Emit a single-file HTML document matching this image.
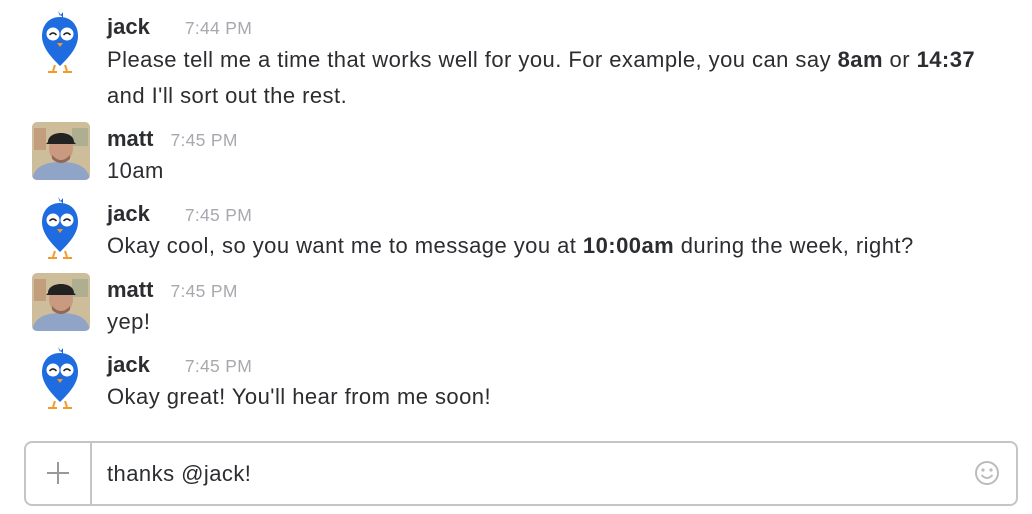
<!DOCTYPE html>
<html><head><meta charset="utf-8"><style>
body{margin:0;width:1032px;height:514px;background:#fff;position:relative;overflow:hidden;font-family:"Liberation Sans",sans-serif;color:#2c2d30}
.a{position:absolute;white-space:nowrap}
.n{font-weight:bold;font-size:22px;color:#2c2d30}
.t{font-size:17.5px;color:#a8a8ae;margin-left:17px;font-weight:normal;letter-spacing:0.3px}
.m{font-size:22px;letter-spacing:0.45px}
.photo{position:absolute;width:58px;height:58px;border-radius:5px;overflow:hidden}
</style></head><body>
<svg width="0" height="0" style="position:absolute"><defs>
<g id="bird">
<path d="M18 3 l2 5 l3 -4 l0 6 z" fill="#1e5fd6"/>
<path d="M20 9 C8 9 2 18 2 28 C2 40 12 50 20 58 C28 50 38 40 38 28 C38 18 32 9 20 9Z" fill="#1f6ce0"/>
<circle cx="13" cy="26" r="6.5" fill="#fff"/>
<circle cx="27" cy="26" r="6.5" fill="#fff"/>
<path d="M9.5 27 q3.5 -4 7 0 M23.5 27 q3.5 -4 7 0" stroke="#222" stroke-width="1.4" fill="none"/>
<path d="M17 35 l3 4 l3 -4z" fill="#f39a2b"/>
<path d="M15 57 l-2 6 M25 57 l2 6 M8 64 h9 M23 64 h9" stroke="#f39a2b" stroke-width="2"/>
</g>
<g id="face">
<rect x="0" y="0" width="58" height="58" fill="#cdbd9b"/>
<rect x="2" y="6" width="12" height="22" fill="#b7805f" opacity=".5"/>
<rect x="40" y="6" width="16" height="18" fill="#9aa58a" opacity=".6"/>
<path d="M0 58 C2 44 14 40 29 40 C44 40 56 44 58 58Z" fill="#8fa4c6"/>
<ellipse cx="29" cy="26" rx="12" ry="15" fill="#c99a80"/>
<path d="M16 20 C16 8 42 8 42 20 L44 22 L14 22Z" fill="#222"/>
<path d="M20 33 q9 10 18 0 l0 4 q-9 8 -18 0z" fill="#6b4a3a" opacity=".6"/>
</g>
</defs></svg>

<svg class="a" style="left:40px;top:8px" width="42" height="66"><use href="#bird"/></svg>
<div class="a n" style="left:107px;top:14px">jack<span class="t" style="margin-left:35px">7:44 PM</span></div>
<div class="a m" style="left:107px;top:47px">Please tell me a time that works well for you. For example, you can say <b>8am</b> or <b>14:37</b></div>
<div class="a m" style="left:107px;top:83px">and I'll sort out the rest.</div>

<svg class="photo" style="left:32px;top:122px" width="58" height="58"><use href="#face"/></svg>
<div class="a n" style="left:107px;top:126px">matt<span class="t">7:45 PM</span></div>
<div class="a m" style="left:107px;top:158px">10am</div>

<svg class="a" style="left:40px;top:194px" width="42" height="66"><use href="#bird"/></svg>
<div class="a n" style="left:107px;top:201px">jack<span class="t" style="margin-left:35px">7:45 PM</span></div>
<div class="a m" style="left:107px;top:233px">Okay cool, so you want me to message you at <b>10:00am</b> during the week, right?</div>

<svg class="photo" style="left:32px;top:273px" width="58" height="58"><use href="#face"/></svg>
<div class="a n" style="left:107px;top:277px">matt<span class="t">7:45 PM</span></div>
<div class="a m" style="left:107px;top:309px">yep!</div>

<svg class="a" style="left:40px;top:344px" width="42" height="66"><use href="#bird"/></svg>
<div class="a n" style="left:107px;top:352px">jack<span class="t" style="margin-left:35px">7:45 PM</span></div>
<div class="a m" style="left:107px;top:384px">Okay great! You'll hear from me soon!</div>

<div class="a" style="left:24px;top:441px;width:990px;height:61px;border:2px solid #c5c5c5;border-radius:8px"></div>
<div class="a" style="left:90px;top:443px;width:2px;height:61px;background:#c5c5c5"></div>
<svg class="a" style="left:46px;top:461px" width="24" height="24"><path d="M12 1v22M1 12h22" stroke="#999" stroke-width="2"/></svg>
<div class="a m" style="left:107px;top:461px">thanks @jack!</div>
<svg class="a" style="left:974px;top:460px" width="26" height="26"><circle cx="13" cy="13" r="11" fill="none" stroke="#bbb" stroke-width="2"/><circle cx="9" cy="10" r="1.6" fill="#bbb"/><circle cx="17" cy="10" r="1.6" fill="#bbb"/><path d="M7.5 15 q5.5 6 11 0" fill="none" stroke="#bbb" stroke-width="2"/></svg>
</body></html>
